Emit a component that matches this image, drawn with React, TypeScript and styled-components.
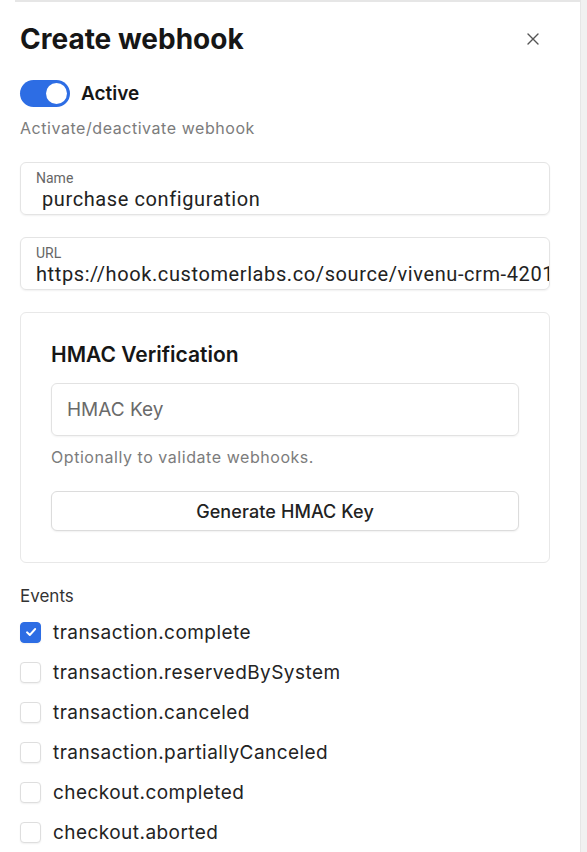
import styled, { createGlobalStyle } from "styled-components";

const GlobalStyle = createGlobalStyle`
    html, body {
        margin: 0;
        padding: 0;
        background: #ffffff;
    }
    body {
        font-family: Inter, "Noto Sans", sans-serif;
        color: #1c1c1e;
    }
`;

const Page = styled.div`
    display: flex;
    width: 587px;
    min-height: 852px;
`;

const Panel = styled.div`
    flex: 1;
    min-width: 0;
    margin-left: 15px;
    padding: 0 30px 0 5px;
    border-top: 2px solid #e6e6e6;
    box-sizing: border-box;
`;

const ScrollTrack = styled.div`
    flex: 0 0 6px;
    background: #f1f1f1;
    border-left: 1px solid #e6e6e6;
`;

const Header = styled.header`
    display: flex;
    align-items: center;
    justify-content: space-between;
    height: 74px;
    box-sizing: border-box;
`;

const Title = styled.h1`
    margin: 0;
    font-size: 28px;
    font-weight: 700;
    color: #161616;
`;

const CloseButton = styled.button`
    border: none;
    background: none;
    padding: 0;
    margin-right: 10px;
    display: flex;
    color: #555;
    cursor: pointer;
`;

const ToggleRow = styled.div`
    display: flex;
    align-items: center;
    gap: 11px;
    height: 30px;
    margin-top: 2px;
`;

const Toggle = styled.span<{ $on: boolean }>`
    position: relative;
    width: 50px;
    height: 27px;
    border-radius: 14px;
    background: ${(p) => (p.$on ? "#2d6de4" : "#d0d0d0")};
    &::after {
        content: "";
        position: absolute;
        top: 3px;
        left: ${(p) => (p.$on ? "26px" : "3px")};
        width: 21px;
        height: 21px;
        border-radius: 50%;
        background: #fff;
    }
`;

const ToggleLabel = styled.span`
    font-size: 19px;
    font-weight: 600;
    color: #161616;
`;

const Hint = styled.p`
    margin: 0;
    font-size: 16px;
    line-height: 20px;
    letter-spacing: 0.55px;
    color: #7c7c7c;
`;

const TopHint = styled(Hint)`
    margin-top: 10px;
    margin-bottom: 24px;
`;

const Field = styled.div`
    display: flex;
    flex-direction: column;
    height: 53px;
    padding: 7px 15px 0;
    box-sizing: border-box;
    border: 1px solid #e4e4e4;
    border-radius: 6px;
    box-shadow: 0 1px 2px rgba(0, 0, 0, 0.06);
    margin-bottom: 22px;
    overflow: hidden;
`;

const FieldLabel = styled.span`
    font-family: Roboto, sans-serif;
    font-size: 14px;
    color: #666;
    line-height: 16px;
`;

const FieldValue = styled.span<{ $indent?: boolean }>`
    font-family: Roboto, sans-serif;
    font-size: 20px;
    letter-spacing: 0.6px;
    color: #222;
    white-space: nowrap;
    line-height: 26px;
    padding-left: ${(p) => (p.$indent ? "6px" : "0")};
`;

const Card = styled.section`
    border: 1px solid #e8e8e8;
    border-radius: 6px;
    padding: 29px 30px 31px;
    margin-bottom: 23px;
`;

const CardTitle = styled.h2`
    margin: 0 0 15px;
    font-size: 21px;
    line-height: 26px;
    font-weight: 600;
    color: #161616;
`;

const KeyInput = styled.div`
    height: 53px;
    box-sizing: border-box;
    display: flex;
    align-items: center;
    padding: 0 15px;
    border: 1px solid #e2e2e2;
    border-radius: 6px;
    box-shadow: 0 1px 2px rgba(0, 0, 0, 0.05);
    font-size: 19px;
    color: #6a6a6a;
`;

const CardHint = styled(Hint)`
    margin: 11px 0 24px;
`;

const GenerateButton = styled.button`
    display: block;
    width: 100%;
    height: 40px;
    border: 1px solid #dcdcdc;
    border-radius: 6px;
    background: #fff;
    box-shadow: 0 1px 2px rgba(0, 0, 0, 0.06);
    font-family: Inter, sans-serif;
    font-size: 18px;
    letter-spacing: 0.1px;
    font-weight: 500;
    color: #222;
`;

const EventsLabel = styled.div`
    font-size: 17px;
    line-height: 20px;
    color: #333;
    margin-bottom: 6px;
`;

const EventList = styled.ul`
    list-style: none;
    margin: 0;
    padding: 0;
`;

const EventRow = styled.li`
    display: flex;
    align-items: center;
    gap: 12px;
    height: 40px;
`;

const Box = styled.span<{ $checked: boolean }>`
    display: flex;
    align-items: center;
    justify-content: center;
    width: 21px;
    height: 21px;
    box-sizing: border-box;
    border-radius: 4px;
    border: 1px solid ${(p) => (p.$checked ? "#2d6de4" : "#dedede")};
    background: ${(p) => (p.$checked ? "#2d6de4" : "#fff")};
    box-shadow: 0 1px 2px rgba(0, 0, 0, 0.06);
`;

const EventName = styled.span`
    font-size: 19px;
    letter-spacing: 0.45px;
    color: #232323;
`;

const events = [
    { name: "transaction.complete", checked: true },
    { name: "transaction.reservedBySystem", checked: false },
    { name: "transaction.canceled", checked: false },
    { name: "transaction.partiallyCanceled", checked: false },
    { name: "checkout.completed", checked: false },
    { name: "checkout.aborted", checked: false },
];

function App() {
    return (
        <Page>
            <GlobalStyle />
            <Panel>
                <Header>
                    <Title>Create webhook</Title>
                    <CloseButton aria-label="Close">
                        <svg width="14" height="14" viewBox="0 0 14 14">
                            <path d="M2 2 L12 12 M12 2 L2 12" stroke="currentColor" strokeWidth="1.4" strokeLinecap="round" />
                        </svg>
                    </CloseButton>
                </Header>
                <ToggleRow>
                    <Toggle $on={true} />
                    <ToggleLabel>Active</ToggleLabel>
                </ToggleRow>
                <TopHint>Activate/deactivate webhook</TopHint>
                <Field>
                    <FieldLabel>Name</FieldLabel>
                    <FieldValue $indent>purchase configuration</FieldValue>
                </Field>
                <Field>
                    <FieldLabel>URL</FieldLabel>
                    <FieldValue>https://hook.customerlabs.co/source/vivenu-crm-4201</FieldValue>
                </Field>
                <Card>
                    <CardTitle>HMAC Verification</CardTitle>
                    <KeyInput>HMAC Key</KeyInput>
                    <CardHint>Optionally to validate webhooks.</CardHint>
                    <GenerateButton>Generate HMAC Key</GenerateButton>
                </Card>
                <EventsLabel>Events</EventsLabel>
                <EventList>
                    {events.map((ev) => (
                        <EventRow key={ev.name}>
                            <Box $checked={ev.checked}>
                                {ev.checked && (
                                    <svg width="14" height="14" viewBox="0 0 14 14">
                                        <path d="M3 7.3 L5.8 10 L11.2 4" fill="none" stroke="#fff" strokeWidth="1.9" strokeLinecap="round" strokeLinejoin="round" />
                                    </svg>
                                )}
                            </Box>
                            <EventName>{ev.name}</EventName>
                        </EventRow>
                    ))}
                </EventList>
            </Panel>
            <ScrollTrack />
        </Page>
    );
}

export default App;
